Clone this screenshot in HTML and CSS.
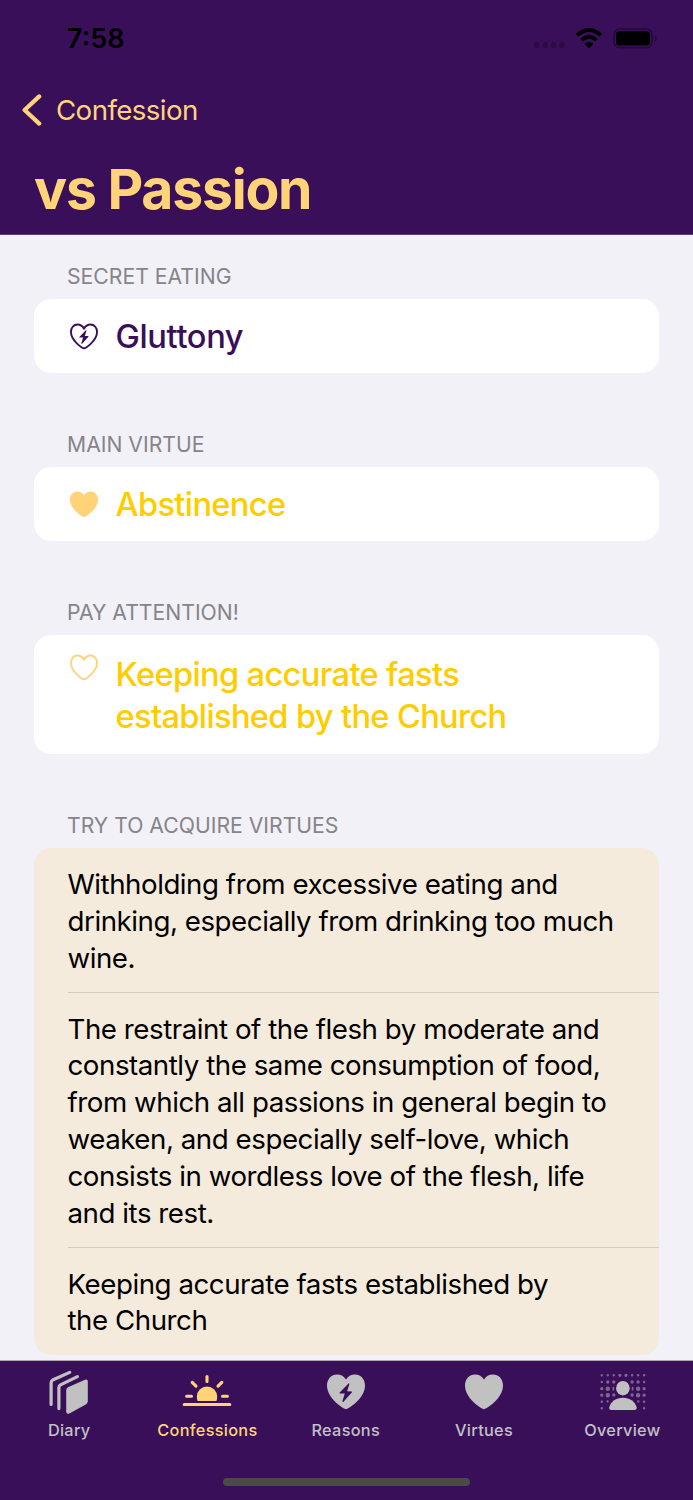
FILE: index.html
```html
<!DOCTYPE html>
<html lang="en">
<head>
  <meta charset="UTF-8">
  <title>vs Passion</title>
  <link rel="stylesheet" href="styles.css">
</head>
<body>
  <svg class="defs" width="0" height="0">
    <symbol id="heart" viewBox="0 0 38 36">
      <path d="M19 35.3C17.6 35.3 0 25 0 11.6C0 5 4.3.5 10 .5C14 .5 17.2 2.4 19 5.6C20.8 2.4 24 .5 28 .5C33.7 .5 38 5 38 11.6C38 25 20.4 35.3 19 35.3Z" fill="currentColor"/>
    </symbol>
    <symbol id="heart-line" viewBox="0 0 38 36">
      <path d="M19 34C17.6 34 1.3 24.5 1.3 11.6C1.3 5.7 5.2 1.8 10 1.8C14 1.8 17.2 4 19 7.4C20.8 4 24 1.8 28 1.8C32.8 1.8 36.7 5.7 36.7 11.6C36.7 24.5 20.4 34 19 34Z" fill="none" stroke="currentColor" stroke-width="2.6" stroke-linejoin="round"/>
    </symbol>
    <symbol id="bolt" viewBox="0 0 38 36">
      <path d="M21.5 9.4L12.7 18.6Q12.2 19.4 13 19.5L17.8 19.5L15.4 27.2Q15.5 28.4 16.5 27.8L25 18.3Q25.4 17.5 24.6 17.4L20.1 17.3L22.4 10Q22.3 9 21.5 9.4Z" fill="currentColor"/>
    </symbol>
  </svg>

  <header class="header">
    <div class="status">
      <span class="time">7:58</span>
      <svg class="signal" width="31" height="6" viewBox="0 0 31 6">
        <rect x="0" width="5.6" height="6" rx="2"/>
        <rect x="8.4" width="5.6" height="6" rx="2"/>
        <rect x="16.8" width="5.6" height="6" rx="2"/>
        <rect x="25.2" width="5.6" height="6" rx="2"/>
      </svg>
      <svg class="wifi" width="28" height="21" viewBox="0 0 28 21">
        <path d="M2 7.3Q14-3.2 26 7.3M6.6 12.2Q14 5.5 21.4 12.2" fill="none" stroke="#000" stroke-width="3.8"/>
        <path d="M14 20.5L9.5 15.8Q14 12.4 18.5 15.8Z"/>
      </svg>
      <svg class="battery" width="44" height="21" viewBox="0 0 44 21">
        <rect x="1" y="1" width="38" height="18.6" rx="5.5" fill="none" stroke="#000" stroke-opacity=".4" stroke-width="1.6"/>
        <rect x="3" y="3.2" width="34" height="14.2" rx="3.5"/>
        <path d="M41.6 7v7q2.2-1.2 2.2-3.5t-2.2-3.5z" opacity=".4"/>
      </svg>
    </div>
    <div class="back">
      <svg width="20" height="32" viewBox="0 0 20 32">
        <path d="M17.2 2.4L2.6 16L17.2 29.6" fill="none" stroke="currentColor" stroke-width="4.2" stroke-linecap="round" stroke-linejoin="round"/>
      </svg>
      <span>Confession</span>
    </div>
    <h1>vs Passion</h1>
  </header>

  <main class="content">
    <h2 class="first">Secret eating</h2>
    <div class="card passion">
      <svg class="icon" width="28" height="27"><use href="#heart-line"/><use href="#bolt"/></svg>
      <p>Gluttony</p>
    </div>

    <h2>Main virtue</h2>
    <div class="card virtue">
      <svg class="icon" width="28" height="27"><use href="#heart"/></svg>
      <p>Abstinence</p>
    </div>

    <h2>Pay attention!</h2>
    <div class="card virtue tall">
      <svg class="icon" width="28" height="27"><use href="#heart-line"/></svg>
      <p>Keeping accurate fasts<br>established by the Church</p>
    </div>

    <h2>Try to acquire virtues</h2>
    <ul class="list">
      <li>Withholding from excessive eating and<br>drinking, especially from drinking too much<br>wine.</li>
      <li>The restraint of the flesh by moderate and<br>constantly the same consumption of food,<br>from which all passions in general begin to<br>weaken, and especially self-love, which<br>consists in wordless love of the flesh, life<br>and its rest.</li>
      <li>Keeping accurate fasts established by<br>the Church</li>
    </ul>
  </main>

  <nav class="tabs">
    <div class="tab">
      <svg width="50" height="46" viewBox="0 0 50 46">
        <path d="M7.1 34.5V12.8Q7.1 11 8.7 10L25.7 2.4M14.9 38.6V17.4Q14.9 15.8 16.5 14.8L33.4 6.6" fill="none" stroke="currentColor" stroke-width="3.2" stroke-linecap="round"/>
        <path d="M22.2 20.4Q22.2 18.4 24 17.3L41 9.8Q43.8 8.8 43.8 11.6V31.3Q43.8 33 42.2 34.2L25.4 43.4Q22.2 44.5 22.2 41.4Z" fill="currentColor"/>
      </svg>
      <span>Diary</span>
    </div>
    <div class="tab active">
      <svg width="50" height="46" viewBox="0 0 50 46">
        <path d="M2.2 34.5H47.8M4.6 26.3H9.5M40.5 26.3H45.4M10.2 12.3L14 16.2M39.8 12.3L36 16.2M25 6.5V11.4" fill="none" stroke="currentColor" stroke-width="3.1" stroke-linecap="round"/>
        <path d="M15.6 31Q14.8 29 14.8 26.8A10.2 10.2 0 0 1 35.2 26.8Q35.2 29 34.4 31Z" fill="currentColor"/>
      </svg>
      <span>Confessions</span>
    </div>
    <div class="tab">
      <svg width="38" height="46" viewBox="0 -4 38 46">
        <use href="#heart" width="38" height="36"/>
        <use href="#bolt" class="cutout" width="38" height="36"/>
      </svg>
      <span>Reasons</span>
    </div>
    <div class="tab">
      <svg width="38" height="46" viewBox="0 -4 38 46">
        <use href="#heart" width="38" height="36"/>
      </svg>
      <span>Virtues</span>
    </div>
    <div class="tab">
      <svg width="50" height="46" viewBox="-.8 0 50 46">
        <g fill="none" stroke="currentColor" stroke-linecap="round" opacity=".5">
          <path d="M4 5.3h0M10 5.3h0M16 5.3h0M34.3 5.3h0M40.3 5.3h0M46.3 5.3h0M4 12h0M46.3 12h0M4 31.7h0M46.3 31.7h0M4 38.3h0M46.3 38.3h0M9.8 31.4h0M40.5 31.4h0" stroke-width="2.4"/>
          <path d="M22.1 5.3h0M28.2 5.3h0M10 12h0M16 12h0M34.3 12h0M40.3 12h0M4 18.7h0M46.3 18.7h0M4 25.2h0M46.3 25.2h0M16 25h0M34.3 25h0" stroke-width="3.3"/>
          <path d="M10 18.7h0M40.3 18.7h0M10 25.2h0M40.3 25.2h0" stroke-width="4.4"/>
          <path d="M15.5 17.7v2M34.8 17.7v2" stroke-width="1.8"/>
        </g>
        <ellipse cx="25.1" cy="18.2" rx="6.8" ry="7.3" fill="currentColor"/>
        <path d="M13.5 40Q11 40 11.5 37.3C13 31.5 18.4 27.8 25.1 27.8S37.2 31.5 38.8 37.3Q39.2 40 36.7 40Z" fill="currentColor"/>
      </svg>
      <span>Overview</span>
    </div>
    <div class="home-bar"></div>
  </nav>
</body>
</html>
```
FILE: styles.css
```css
* {
  box-sizing: border-box;
}
body {
  margin: 0;
  width: 693px;
  height: 1500px;
  overflow: hidden;
  display: flex;
  flex-direction: column;
  background: #f2f1f7;
  font-family: Inter, "Liberation Sans", sans-serif;
}
h1, h2, p, ul {
  margin: 0;
  padding: 0;
  font-weight: 400;
}
.defs {
  display: none;
}
.header {
  flex: none;
  height: 235px;
  background: #390f5a;
  border-bottom: 1px solid #5f3d7c;
  color: #ffd479;
}
.status {
  height: 76px;
  padding: 0 36px 0 67px;
  display: flex;
  align-items: center;
  color: #000;
}
.time {
  flex: 1;
  padding-top: 2px;
  font-size: 27px;
  font-weight: 600;
  line-height: 76px;
}
.signal {
  margin: 13px 10px 0 0;
  opacity: .22;
}
.wifi {
  margin-right: 10px;
}
.back {
  height: 68px;
  padding-left: 22px;
  display: flex;
  align-items: center;
  gap: 14px;
  font-size: 27.7px;
  letter-spacing: -0.6px;
}
h1 {
  padding-left: 34px;
  font-size: 55.3px;
  font-weight: 700;
  letter-spacing: -1.25px;
  line-height: 90px;
}
.content {
  height: 1125px;
  flex: none;
  padding: 0 34px;
}
h2 {
  height: 94px;
  padding: 48px 33px 0;
  font-size: 21.2px;
  line-height: 46px;
  color: #858489;
  text-transform: uppercase;
}
h2.first {
  height: 64px;
  padding-top: 18px;
}
.card {
  height: 74px;
  padding: 0 36px;
  display: flex;
  align-items: center;
  gap: 17.5px;
  background: #fff;
  border-radius: 17px;
  font-size: 32.6px;
  letter-spacing: -0.64px;
  line-height: 42px;
}
.card p {
  font-weight: 500;
}
.icon {
  flex: none;
}
.passion {
  color: #390f5a;
  letter-spacing: -0.36px;
}
.virtue {
  color: #ffd479;
}
.virtue p {
  color: #ffcc00;
}
.tall {
  height: 119px;
  padding-top: 18px;
  align-items: flex-start;
}
.tall .icon {
  margin-top: 1px;
}
.list {
  list-style: none;
  background: #f5ebdd;
  border-radius: 17px;
  padding-left: 33.5px;
  font-size: 27.7px;
  letter-spacing: -0.46px;
  line-height: 36.85px;
}
.list li {
  padding: 18px 0 15px;
  border-bottom: 1px solid #d3cac2;
}
.list li:last-child {
  padding-bottom: 15.8px;
  border-bottom: 0;
}
.tabs {
  position: relative;
  flex: none;
  height: 140px;
  padding-right: 1.5px;
  display: grid;
  grid-template-columns: repeat(5, 1fr);
  background: #390f5a;
  border-top: 1px solid #aaa4b3;
  color: #c2c1c2;
}
.tab {
  padding-top: 9px;
  display: flex;
  flex-direction: column;
  align-items: center;
  font-size: 16.3px;
  font-weight: 500;
  letter-spacing: 0.3px;
  line-height: 29px;
}
.active {
  color: #ffd479;
}
.cutout {
  color: #390f5a;
}
.home-bar {
  position: absolute;
  left: 223px;
  bottom: 14px;
  width: 247px;
  height: 8px;
  border-radius: 4px;
  background: #4b4a4b;
}
```
